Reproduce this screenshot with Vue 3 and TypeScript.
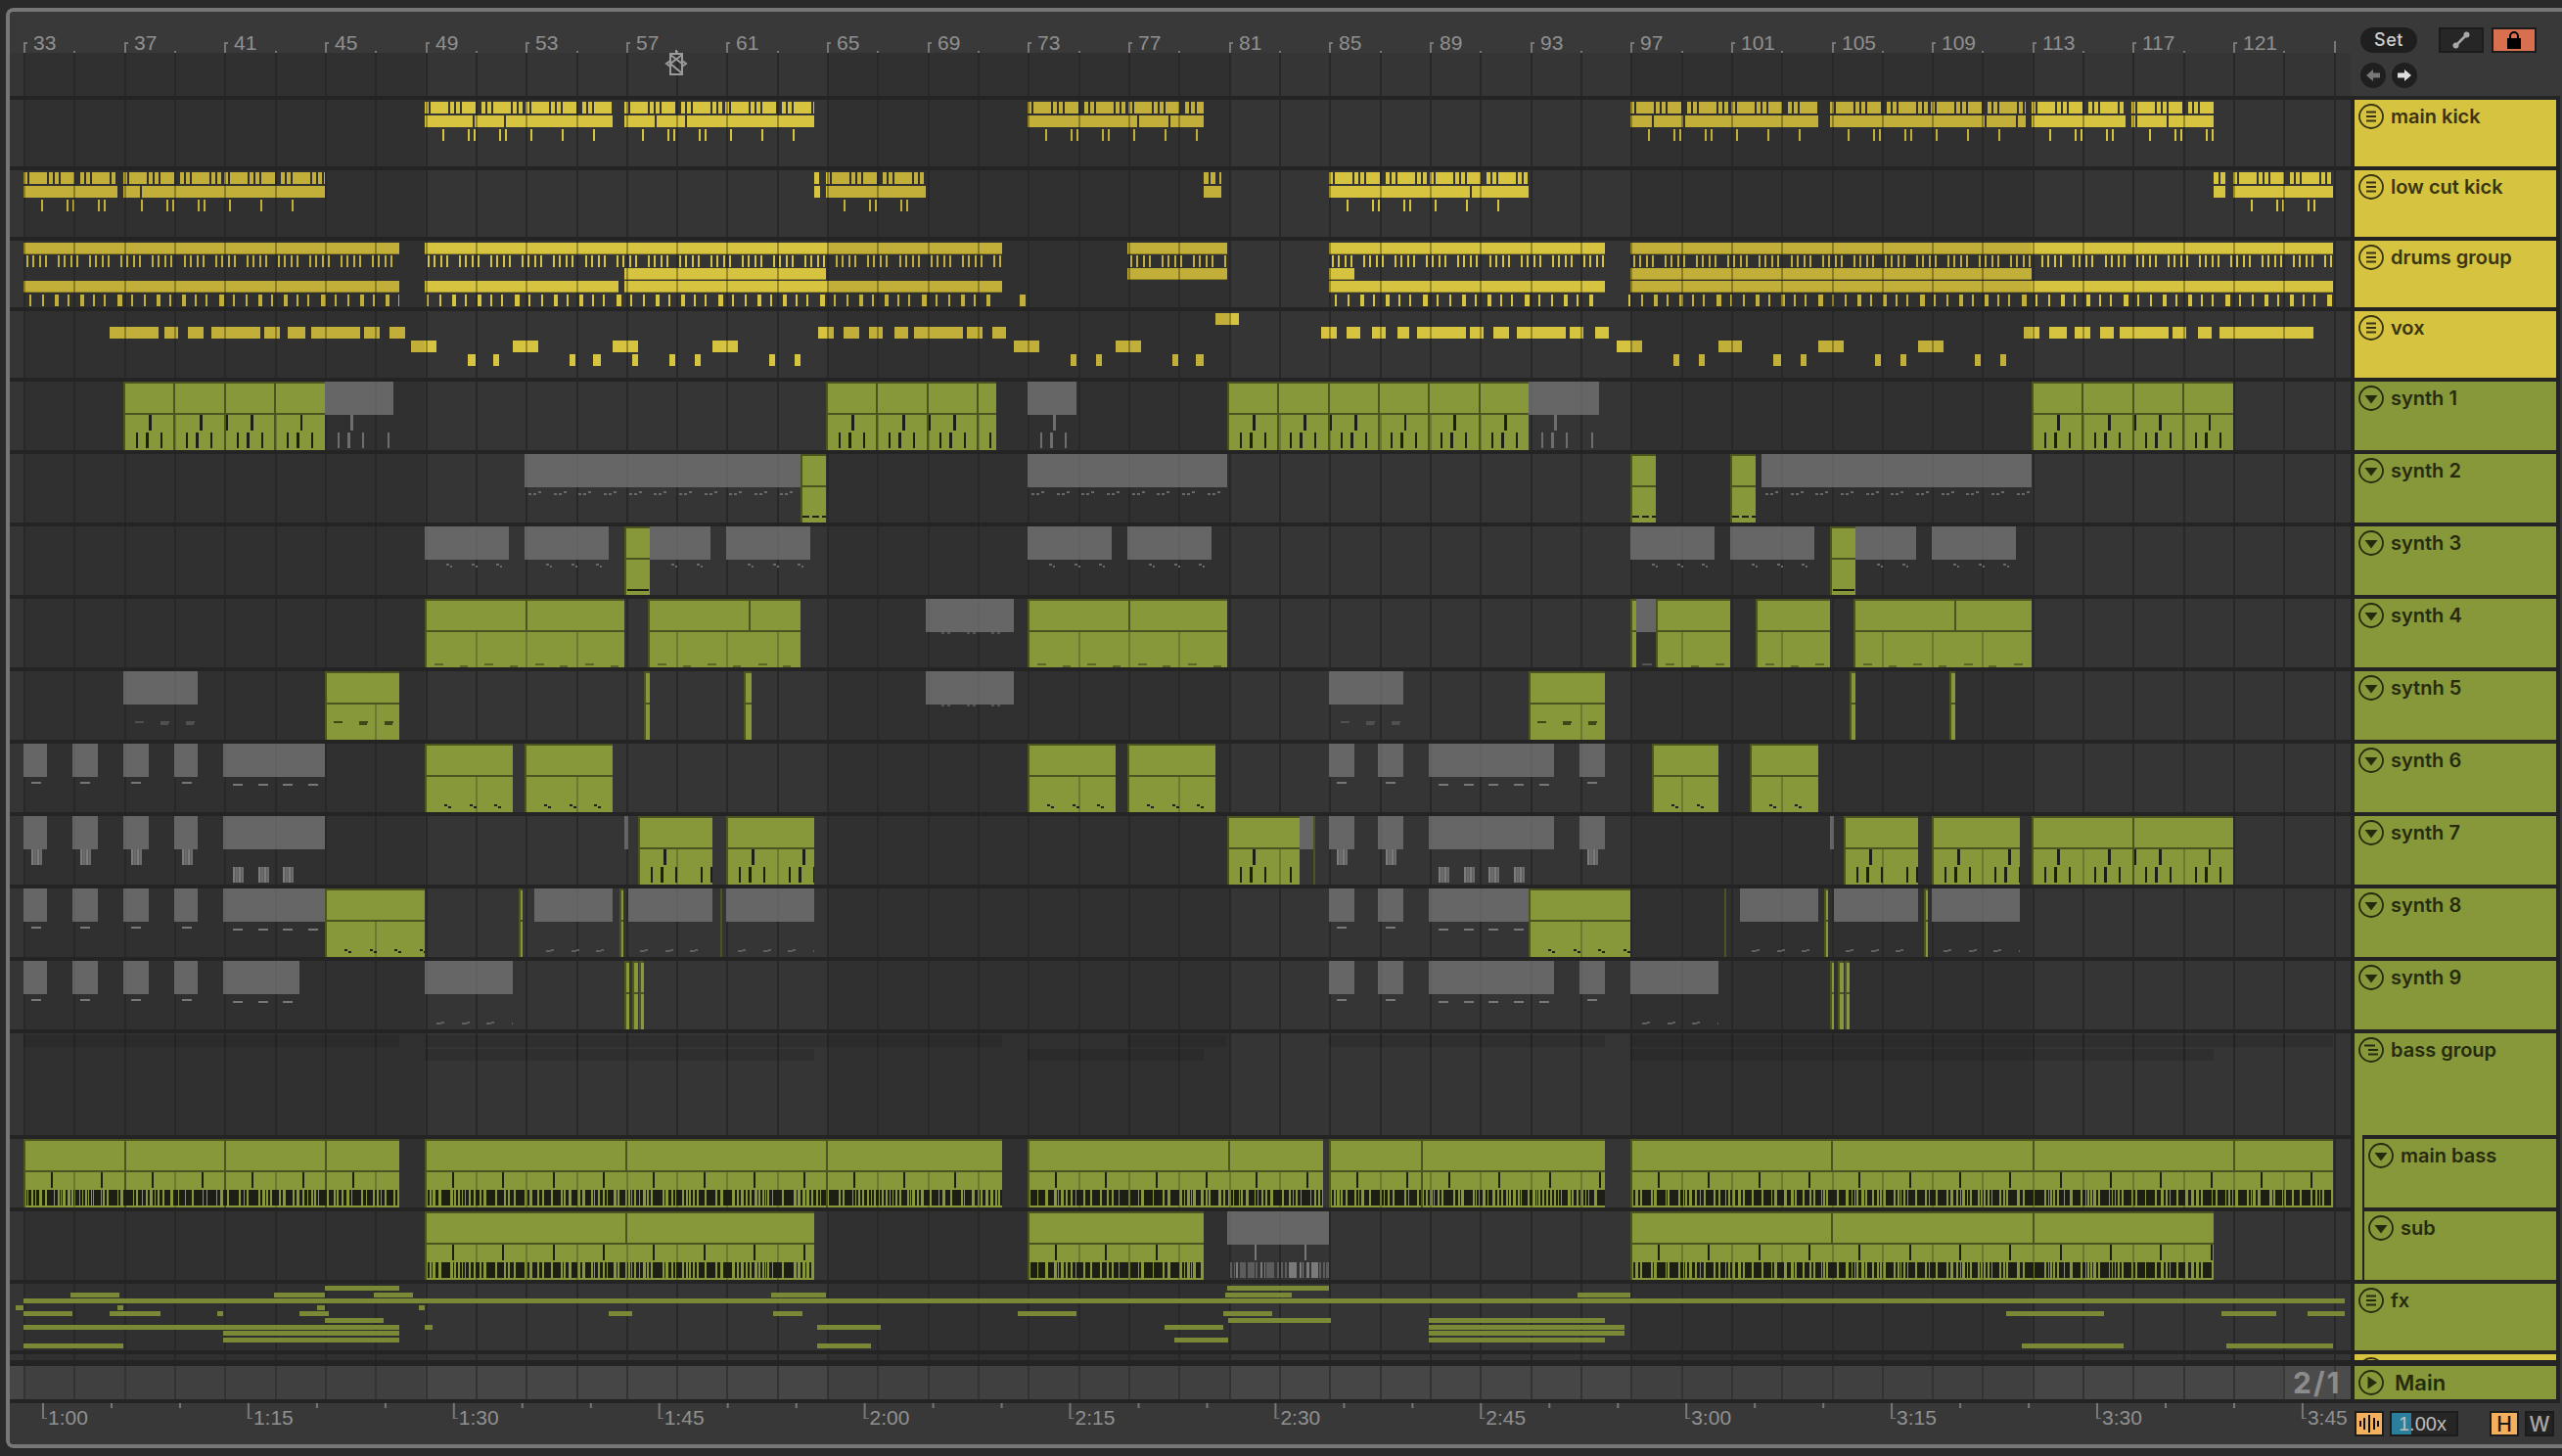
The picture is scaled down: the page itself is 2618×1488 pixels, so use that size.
<script setup lang="ts">
type R = [number, number, number, number, string]
type Clip = [string, number, number, number?]

const BAR = 25.66
const X0 = 24
const barX = (b: number) => X0 + (b - 33) * BAR

const GREEN = '#87983a'
const OLIVE = '#4c5522'
const OLIVE_L = '#6b7a30'
const GRAY = '#666666'
const NOTE = '#1e1f14'
const LINE = '#282828'

const zones: [number, number, boolean][] = [
  [10, 24, false], [24, 434, true], [434, 845, false], [845, 1256, true],
  [1256, 1666, false], [1666, 2076, true], [2076, 2402, false],
]

const grids: number[] = []
for (let b = 33; b <= 125; b += 2) grids.push(Math.round(barX(b)))

function base(h: number, dark = '#303030', light = '#353535', line = LINE): R[] {
  const out: R[] = []
  for (const z of zones) out.push([z[0], 0, z[1] - z[0], h, z[2] ? dark : light])
  for (const g of grids) out.push([g, 0, 2, h, line])
  return out
}

function yellow(out: R[], x: number, y: number, w: number, h: number, edge = false) {
  const end = x + w
  for (const z of zones) {
    const a = Math.max(x, z[0])
    const b = Math.min(end, z[1])
    if (b > a) out.push([a, y, b - a, h, z[2] ? '#c1af3a' : '#d6c340'])
  }
  if (edge) out.push([x, y + h - 1, w, 1, 'rgba(60,50,0,.35)'])
  for (const g of grids) {
    const a = Math.max(x, g)
    const b = Math.min(end, g + 2)
    if (b > a) out.push([a, y, b - a, h, 'rgba(50,42,0,.38)'])
  }
}

function pattern(a: number, b: number, period: number, list: [number, number][], fn: (x: number, w: number) => void) {
  for (let k = 0; k < 200; k++) {
    for (const p of list) {
      const x = a + k * period + p[0]
      if (x >= b) return
      fn(x, Math.min(p[1], b - x))
    }
  }
}

const KICK: [number, number][] = [[0, 4], [6, 18], [26, 4], [32, 4], [38, 14], [58, 4], [64, 4], [70, 18], [90, 4], [96, 4]]
const KTICK: [number, number][] = [[18, 2], [44, 2], [50, 2], [76, 2], [82, 2], [108, 2], [140, 2], [172, 2]]

function kickRow(clips: [number, number, number[]][]): R[] {
  const o = base(68)
  for (const [a, b, gaps] of clips) {
    if (b - a > 30) {
      pattern(a, b, 102.66, KICK, (x, w) => yellow(o, x, 2, w, 12))
      pattern(a, b, 192, KTICK, (x, w) => yellow(o, x, 30, w, 12))
    } else {
      pattern(a, b, 16, [[0, 5], [7, 5]], (x, w) => yellow(o, x, 2, w, 12))
    }
    let s = a
    for (const g of [...gaps, b]) {
      yellow(o, s, 16, g - s - (g === b ? 0 : 2), 12)
      s = g
    }
  }
  return o
}

const DT: [number, number][] = [[3, 2], [9, 2], [16, 2], [22, 2]]
const DL: [number, number][] = [[6, 2], [19, 2], [32, 4], [45, 2], [58, 4], [71, 2], [82, 2], [96, 5]]

function drumsRow(): R[] {
  const o = base(68)
  const mains: [number, number][] = [[24, 408], [434, 1024], [1152, 1254], [1358, 1640], [1666, 2384]]
  for (const [a, b] of mains) {
    yellow(o, a, 2, b - a, 12, true)
    pattern(a, b, 32.1, DT, (x, w) => yellow(o, x, 15, w, 12))
  }
  for (const [a, b] of [[638, 844], [1152, 1254], [1358, 1384], [1666, 2076]] as [number, number][]) {
    yellow(o, a, 28, b - a, 12, true)
  }
  for (const [a, b] of [[24, 408], [434, 632], [638, 1024], [1358, 1640], [1666, 2384]] as [number, number][]) {
    yellow(o, a, 41, b - a, 12, true)
  }
  for (const [a, b] of [[24, 408], [430, 1018], [1358, 1636], [1658, 2384]] as [number, number][]) {
    pattern(a, b, 104, DL, (x, w) => yellow(o, x, 55, w, 12))
  }
  yellow(o, 1042, 55, 6, 12)
  return o
}

function voxRow(): R[] {
  const o = base(68)
  const L: [number, number, number][] = [
    [0, 1242, 1266],
    ...[[112, 162], [168, 182], [192, 208], [216, 266], [270, 286], [294, 312], [318, 368], [372, 388], [398, 414], [836, 852], [862, 878], [888, 902], [914, 928], [934, 984], [988, 1004], [1014, 1028], [1350, 1366], [1376, 1390], [1402, 1416], [1428, 1440], [1448, 1498], [1502, 1516], [1526, 1542], [1550, 1600], [1604, 1618], [1630, 1644], [2068, 2084], [2094, 2112], [2120, 2136], [2146, 2160], [2166, 2216], [2220, 2234], [2246, 2260], [2268, 2364]].map((p) => [1, p[0], p[1]] as [number, number, number]),
    ...[[420, 446], [524, 550], [626, 652], [728, 754], [1036, 1062], [1140, 1166], [1652, 1678], [1756, 1780], [1858, 1884], [1960, 1986]].map((p) => [2, p[0], p[1]] as [number, number, number]),
    ...[[478, 486], [504, 510], [582, 588], [606, 614], [646, 652], [684, 690], [710, 716], [786, 792], [812, 818], [1094, 1100], [1120, 1126], [1198, 1204], [1222, 1230], [1710, 1716], [1736, 1742], [1812, 1820], [1840, 1846], [1916, 1922], [1942, 1948], [2018, 2024], [2044, 2050]].map((p) => [3, p[0], p[1]] as [number, number, number]),
  ]
  for (const [l, a, b] of L) yellow(o, a, 2 + l * 14, b - a, 12)
  return o
}

function dense(a: number, b: number, y: number, h: number, o: R[], dark: string, mid?: string) {
  let n = Math.round(a) + 1
  const rnd = () => {
    n += 1
    const v = Math.sin(n * 12.9898) * 43758.5453
    return v - Math.floor(v)
  }
  let x = a + 3
  while (x < b - 1) {
    const big = rnd() > 0.72
    const w = big ? 4 + Math.round(rnd() * 6) : 1 + Math.round(rnd() * 2)
    o.push([x, y, Math.min(w, b - x), h, mid && rnd() > 0.5 ? mid : dark])
    x += w + 1 + Math.round(rnd() * 2)
  }
}

type NoteFn = (o: R[], t: string, a: number, b: number) => void

function notes(o: R[], a: number, b: number, period: number, start: number, list: [number, number, number, number][], color: string) {
  for (let k = 0; k < 100; k++) {
    for (const [r, y, w, h] of list) {
      const x = a + start + k * period + r
      if (x >= b) return
      o.push([x, y, Math.min(w, b - x), h, color])
    }
  }
}

function sliced(o: R[], x: number, y: number, w: number, h: number) {
  o.push([x, y, w, h, '#5e5e5e'])
  for (let i = 0; i < w; i += 3) o.push([x + i, y, 2, h, i % 6 === 0 ? '#7c7c7c' : '#6c6c6c'])
}

function synthRow(clips: Clip[], fn: NoteFn, h = 70): R[] {
  const o = base(h)
  for (const [t, a, b, hdr] of clips) {
    if (t === 'g') {
      o.push([a, 0, b - a, h, GREEN])
      for (const g of grids) if (g > a + 2 && g < b - 1) o.push([g, 34, 2, h - 34, OLIVE_L])
      o.push([a, 0, b - a, 2, OLIVE], [a, 32, b - a, 2, OLIVE], [a, 0, 2, h, OLIVE])
      const every = (hdr ?? 4) * BAR
      for (let g = a + every; g < b - 2; g += every) o.push([Math.round(g), 0, 2, hdr === 2 || hdr === 4 ? h : 34, OLIVE])
    } else {
      o.push([a, 0, b - a, 34, GRAY])
      for (const g of grids) if (g > a && g < b - 1) o.push([g, 0, 2, 34, 'rgba(0,0,0,.04)'])
    }
    if (b - a > 14) fn(o, t, a, b)
  }
  return o
}

const ticksFn: NoteFn = (o, t, a, b) => {
  const c = t === 'g' ? NOTE : '#6e6e6e'
  notes(o, a, b, 205, 0, [[26, 34, 3, 16], [78, 34, 3, 16], [105, 34, 2, 16], [130, 34, 3, 16], [181, 34, 2, 16]], c)
  notes(o, a, b, 51.3, 0, [[13, 52, 2, 16], [23, 52, 3, 16], [38, 52, 2, 16]], c)
}

const synth1 = synthRow([['g', 126, 332, 2], ['x', 332, 402], ['g', 844, 1018, 2], ['x', 1050, 1100], ['g', 1254, 1562, 2], ['x', 1562, 1634], ['g', 2076, 2282, 2]], ticksFn)

const synth2 = synthRow([['x', 536, 818], ['g', 818, 844], ['x', 1050, 1254], ['g', 1666, 1692], ['g', 1768, 1794], ['x', 1800, 2076]], (o, t, a, b) => {
  if (t === 'g') notes(o, a, b, 10, 2, [[0, 63, 7, 2]], NOTE)
  else notes(o, a, b, 25.66, 4, [[0, 40, 3, 2], [5, 40, 3, 2], [10, 38, 3, 2]], '#6a6a6a')
})

const synth3 = synthRow([['x', 434, 520], ['x', 536, 622], ['g', 638, 664], ['x', 664, 726], ['x', 742, 828], ['x', 1050, 1136], ['x', 1152, 1238], ['x', 1666, 1752], ['x', 1768, 1854], ['g', 1870, 1896], ['x', 1896, 1958], ['x', 1974, 2060]], (o, t, a, b) => {
  if (t === 'g') o.push([a + 3, 64, b - a - 4, 2, NOTE])
  else notes(o, a, b, 25.66, 22, [[0, 38, 3, 2], [4, 40, 2, 2]], '#6a6a6a')
})

const synth4 = synthRow([['g', 434, 638], ['g', 662, 818], ['x', 946, 1036], ['g', 1050, 1254], ['g', 1666, 1672], ['g', 1692, 1768], ['g', 1794, 1870], ['g', 1894, 2076]], (o, t, a, b) => {
  if (t === 'g') notes(o, a, b, 51.3, 10, [[0, 66, 9, 2], [25.6, 68, 8, 2]], '#5a6726')
  else notes(o, a, b, 25.66, 16, [[0, 34, 3, 2], [6, 34, 3, 2]], '#555555')
})
synth4.push([1672, 0, 20, 34, GRAY], [1672, 34, 20, 36, '#303030'], [1678, 66, 10, 2, '#555555'])

const synth5 = synthRow([['x', 126, 202], ['g', 332, 408], ['g', 658, 664], ['g', 760, 768], ['x', 946, 1036], ['x', 1358, 1434], ['g', 1562, 1640], ['g', 1890, 1896], ['g', 1992, 1998]], (o, t, a, b) => {
  if (t === 'g') notes(o, a, b, 26, 9, [[0, 51, 9, 2], [26, 53, 8, 2], [52, 51, 9, 2]], '#3f4719')
  else if (b - a < 82) notes(o, a, b, 26, 12, [[0, 51, 9, 2], [26, 53, 8, 2], [52, 51, 9, 2]], '#505050')
  else notes(o, a, b, 25.66, 16, [[0, 34, 3, 2], [6, 34, 3, 2]], '#555555')
})

const GREY_TOP: Clip[] = [['x', 24, 48], ['x', 74, 100], ['x', 126, 152], ['x', 178, 202], ['x', 228, 332]]
const GREY_MID: Clip[] = [['x', 1358, 1384], ['x', 1408, 1434]]

const dashFn = (o: R[], a: number, b: number) => {
  if (b - a < 40) notes(o, a, b, 100, 8, [[0, 39, 10, 2]], '#777777')
  else notes(o, a, b, 25.66, 10, [[0, 41, 10, 2]], '#777777')
}

const synth6 = synthRow([...GREY_TOP, ['g', 434, 524], ['g', 536, 626], ['g', 1050, 1140], ['g', 1152, 1242], ...GREY_MID, ['x', 1460, 1588], ['x', 1614, 1640], ['g', 1688, 1756], ['g', 1788, 1858]], (o, t, a, b) => {
  if (t === 'g') notes(o, a, b, 25.66, 20, [[0, 62, 3, 2], [4, 64, 3, 2]], NOTE)
  else dashFn(o, a, b)
})

const synth7 = synthRow([...GREY_TOP, ['x', 638, 642], ['g', 652, 728], ['g', 742, 832], ['g', 1254, 1328], ['x', 1328, 1342], ['g', 1342, 1344], ...GREY_MID, ['x', 1460, 1588], ['x', 1614, 1640], ['x', 1870, 1874], ['g', 1884, 1960], ['g', 1974, 2064], ['g', 2076, 2282, 4]], (o, t, a, b) => {
  if (t === 'g') {
    ticksFn(o, t, a, b)
  } else if (b - a < 40 && b - a > 20) {
    sliced(o, a + 8, 34, 10, 16)
  } else if (b - a <= 20) {
    o.push([a, 34, 2, 16, GRAY], [a + 4, 52, 2, 16, GRAY])
  } else {
    for (let i = 0; i < (b - a) / 26 - 1; i++) sliced(o, a + 10 + i * 25.66, 52, 10, 16)
  }
})

const synth8 = synthRow([...GREY_TOP, ['g', 332, 434], ['g', 530, 534], ['l', 546, 626], ['g', 633, 637], ['l', 642, 728], ['g', 736, 738], ['l', 742, 832], ...GREY_MID, ['x', 1460, 1562], ['g', 1562, 1666], ['g', 1762, 1764], ['l', 1778, 1858], ['g', 1864, 1868], ['l', 1874, 1960], ['g', 1966, 1970], ['l', 1974, 2064]], (o, t, a, b) => {
  if (t === 'g') notes(o, a, b, 25.66, 20, [[0, 62, 3, 2], [4, 64, 3, 2]], NOTE)
  else if (t === 'l') notes(o, a, b, 25.66, 12, [[0, 63, 5, 2], [5, 62, 3, 2]], '#606060')
  else dashFn(o, a, b)
})

const synth9 = synthRow([['x', 24, 48], ['x', 74, 100], ['x', 126, 152], ['x', 178, 202], ['x', 228, 306], ['l', 434, 524], ['g', 638, 643], ['g', 646, 652], ['g', 653, 658], ...GREY_MID, ['x', 1460, 1588], ['x', 1614, 1640], ['l', 1666, 1756], ['g', 1870, 1874], ['g', 1878, 1884], ['g', 1885, 1890]], (o, t, a, b) => {
  if (t === 'l') notes(o, a, b, 25.66, 12, [[0, 63, 5, 2], [5, 62, 3, 2]], '#606060')
  else dashFn(o, a, b)
})

const bassFn: NoteFn = (o, t, a, b) => {
  if (t === 'g') {
    notes(o, a, b, 51.33, 28, [[0, 34, 2, 16]], NOTE)
    dense(a, b, 52, 16, o, NOTE)
  } else {
    notes(o, a, b, 51.33, 28, [[0, 34, 2, 16]], '#777777')
    dense(a, b, 52, 16, o, '#7a7a7a', '#5c5c5c')
  }
}
const mainBass = synthRow([['g', 24, 408, 4], ['g', 434, 844, 8], ['g', 844, 1024, 8], ['g', 1050, 1352, 8], ['g', 1358, 1452, 8], ['g', 1452, 1640, 8], ['g', 1666, 2384, 8]], bassFn)
const sub = synthRow([['g', 434, 832, 8], ['g', 1050, 1230, 8], ['x', 1254, 1358], ['g', 1666, 2262, 8]], bassFn)

function bassGroup(): R[] {
  const o = base(104)
  for (const [a, b] of [[24, 408], [434, 1024], [1152, 1254], [1358, 1640], [1666, 2384]]) o.push([a, 2, b - a, 12, 'rgba(0,0,0,.1)'])
  for (const [a, b] of [[434, 832], [1050, 1230], [1666, 2262]]) o.push([a, 16, b - a, 12, 'rgba(0,0,0,.1)'])
  return o
}

function fxRow(): R[] {
  const o = base(68)
  const lanes: [number, number][][] = [
    [[332, 408], [1254, 1358]],
    [[72, 122], [280, 332], [382, 422], [788, 844], [1252, 1320], [1612, 1666]],
    [[24, 2396]],
    [[16, 24], [120, 126], [324, 332], [428, 434]],
    [[24, 74], [112, 164], [222, 228], [306, 336], [622, 646], [790, 820], [1040, 1100], [1250, 1300], [2050, 2150], [2270, 2326], [2358, 2396]],
    [[332, 392], [1255, 1360], [1460, 1640]],
    [[24, 408], [434, 442], [835, 900], [1190, 1250], [1460, 1660]],
    [[228, 408], [1460, 1660]],
    [[228, 408], [1200, 1255], [1460, 1640]],
    [[24, 126], [835, 890], [2066, 2170], [2275, 2384]],
  ]
  lanes.forEach((list, i) => {
    for (const [a, b] of list) o.push([a, Math.round(2 + 6.6 * i), b - a, 5, '#7a8935'])
  })
  return o
}

const kickMain = kickRow([[434, 626, [485, 517]], [638, 832, [671, 702]], [1050, 1230, [1164, 1196]], [1666, 1858, [1690, 1722]], [1870, 2070, [2030, 2062]], [2076, 2172, []], [2178, 2262, [2184, 2216]]])
const kickLow = kickRow([[24, 120, []], [126, 332, [145]], [832, 838, []], [844, 946, []], [1230, 1248, []], [1358, 1562, [1504]], [2262, 2274, []], [2282, 2384, []]])

const rows = [
  { name: 'main kick', icon: 'fold', tone: 'y', h: 68, rects: kickMain },
  { name: 'low cut kick', icon: 'fold', tone: 'y', h: 68, rects: kickLow },
  { name: 'drums group', icon: 'fold', tone: 'y', h: 68, rects: drumsRow() },
  { name: 'vox', icon: 'fold', tone: 'y', h: 68, rects: voxRow() },
  { name: 'synth 1', icon: 'tri', tone: 'g', h: 70, rects: synth1 },
  { name: 'synth 2', icon: 'tri', tone: 'g', h: 70, rects: synth2 },
  { name: 'synth 3', icon: 'tri', tone: 'g', h: 70, rects: synth3 },
  { name: 'synth 4', icon: 'tri', tone: 'g', h: 70, rects: synth4 },
  { name: 'sytnh 5', icon: 'tri', tone: 'g', h: 70, rects: synth5 },
  { name: 'synth 6', icon: 'tri', tone: 'g', h: 70, rects: synth6 },
  { name: 'synth 7', icon: 'tri', tone: 'g', h: 70, rects: synth7 },
  { name: 'synth 8', icon: 'tri', tone: 'g', h: 70, rects: synth8 },
  { name: 'synth 9', icon: 'tri', tone: 'g', h: 70, rects: synth9 },
  { name: 'bass group', icon: 'group', tone: 'g', h: 104, rects: bassGroup() },
  { name: 'main bass', icon: 'tri', tone: 'g n1', h: 70, rects: mainBass },
  { name: 'sub', icon: 'tri', tone: 'g n2', h: 70, rects: sub },
  { name: 'fx', icon: 'fold', tone: 'g', h: 68, rects: fxRow() },
]

const stripRects = base(6)
const mainRects: R[] = [...base(34, '#404040', '#464646', '#333333'), [2333, 0, 69, 34, 'rgba(255,255,255,.03)']]

const topRects: R[] = []
const barLabels: { x: number; t: string }[] = []
for (const r of base(44)) topRects.push([r[0], r[1] + 42, r[2], r[3], r[4]])
for (let b = 33; b <= 125; b += 2) {
  const x = Math.round(barX(b))
  if ((b - 33) % 4 === 0) {
    const tall = b === 125 ? 30 : 31
    topRects.push([x, tall, 2, 42 - tall, '#777777'])
    if (b < 125) {
      topRects.push([x, tall, 4, 2, '#777777'])
      barLabels.push({ x: x + 10, t: String(b) })
    }
  } else topRects.push([x, 40, 2, 2, '#777777'])
}

const timeRects: R[] = []
const timeLabels: { x: number; t: string }[] = []
for (let i = 0; i < 12; i++) {
  const x = 43 + i * 209.9
  const min = 1 + Math.floor((i * 15) / 60)
  const sec = (i * 15) % 60
  timeRects.push([x, 0, 2, 16, '#777777'], [x, 15, 5, 1, '#777777'])
  if (i < 11) timeRects.push([x + 70, 0, 2, 5, '#777777'], [x + 140, 0, 2, 5, '#777777'])
  timeLabels.push({ x: x + 6, t: `${min}:${String(sec).padStart(2, '0')}` })
}
</script>

<template>
  <div class="page">
    <div class="frame">
      <div class="head-row">
        <svg class="lane" width="2392" height="86" viewBox="10 0 2392 86">
          <rect v-for="(r, i) in topRects" :key="i" :x="r[0]" :y="r[1]" :width="r[2]" :height="r[3]" :fill="r[4]" />
          <text v-for="l in barLabels" :key="l.t" class="ruler-text" :x="l.x" y="39">{{ l.t }}</text>
          <g class="scrub" fill="none" stroke="#9a9a9a" stroke-width="2">
            <rect x="685" y="43" width="12" height="21" />
            <path d="M697 44 L685 53 L697 63 M685 44 L697 53" />
            <path d="M685 50 L681 53 L685 56 M697 50 L701 53 L697 56" />
            <path d="M691 39V43" />
          </g>
        </svg>
        <div class="tools">
          <div class="tool-row">
            <div class="pill">Set</div>
            <div class="btn follow">
              <svg width="22" height="20" viewBox="0 0 22 20">
                <path d="M6 15L16 5" stroke="#a8a8a8" stroke-width="2.5" />
                <circle cx="5.5" cy="15.5" r="3" fill="#a8a8a8" />
                <circle cx="16.5" cy="4.5" r="3" fill="#a8a8a8" />
              </svg>
            </div>
            <div class="btn lock">
              <svg width="18" height="20" viewBox="0 0 18 20">
                <path d="M5 9V6a4 4 0 0 1 8 0v3" fill="none" stroke="#000" stroke-width="2" />
                <rect x="2" y="8" width="14" height="11" fill="#000" />
              </svg>
            </div>
          </div>
          <div class="tool-row arrows">
            <div class="round">
              <svg width="16" height="14" viewBox="0 0 16 14"><path d="M8 1L1 7L8 13V9.5H15V4.5H8Z" fill="#777" /></svg>
            </div>
            <div class="round">
              <svg width="16" height="14" viewBox="0 0 16 14"><path d="M8 1L15 7L8 13V9.5H1V4.5H8Z" fill="#dedede" /></svg>
            </div>
          </div>
        </div>
      </div>

      <div class="tracks">
        <div v-for="row in rows" :key="row.name" class="track" :style="{ height: row.h + 'px' }">
          <svg class="lane" width="2392" :height="row.h" :viewBox="`10 0 2392 ${row.h}`" shape-rendering="crispEdges">
            <rect v-for="(r, i) in row.rects" :key="i" :x="r[0]" :y="r[1]" :width="r[2]" :height="r[3]" :fill="r[4]" />
          </svg>
          <div class="hdr" :class="row.tone">
            <svg class="ico" width="26" height="26" viewBox="0 0 26 26">
              <circle cx="13" cy="13" r="12" fill="none" stroke="currentColor" stroke-width="1.8" />
              <path v-if="row.icon === 'fold'" d="M8 8.5H18M8 13H18M8 17.5H18" stroke="currentColor" stroke-width="2.2" />
              <path v-else-if="row.icon === 'group'" d="M6 8.5H17M10 13H20M10 17.5H20" stroke="currentColor" stroke-width="2.2" />
              <path v-else d="M6.5 10H19.5L13 18.5Z" fill="currentColor" />
            </svg>
            <span class="name">{{ row.name }}</span>
          </div>
        </div>

        <div class="track strip">
          <svg class="lane" width="2392" height="6" viewBox="10 0 2392 6" shape-rendering="crispEdges">
            <rect v-for="(r, i) in stripRects" :key="i" :x="r[0]" :y="r[1]" :width="r[2]" :height="r[3]" :fill="r[4]" />
          </svg>
          <div class="hdr y sliver">
            <svg class="ico" width="26" height="6" viewBox="0 0 26 6">
              <circle cx="13" cy="16" r="12" fill="none" stroke="currentColor" stroke-width="1.8" />
            </svg>
          </div>
        </div>

        <div class="track main">
          <svg class="lane" width="2392" height="34" viewBox="10 0 2392 34" shape-rendering="crispEdges">
            <rect v-for="(r, i) in mainRects" :key="i" :x="r[0]" :y="r[1]" :width="r[2]" :height="r[3]" :fill="r[4]" />
          </svg>
          <div class="sig">2/1</div>
          <div class="hdr g mainhdr">
            <svg class="ico" width="26" height="26" viewBox="0 0 26 26">
              <circle cx="13" cy="13" r="12" fill="none" stroke="currentColor" stroke-width="1.8" />
              <path d="M9.5 6.5V19.5L19 13Z" fill="currentColor" />
            </svg>
            <span class="name">Main</span>
          </div>
        </div>
      </div>

      <div class="foot-row">
        <svg class="lane" width="2392" height="42" viewBox="10 0 2392 42">
          <rect v-for="(r, i) in timeRects" :key="i" :x="r[0]" :y="r[1]" :width="r[2]" :height="r[3]" :fill="r[4]" />
          <text v-for="l in timeLabels" :key="l.t" class="ruler-text" :x="l.x" y="22">{{ l.t }}</text>
        </svg>
        <div class="controls">
          <div class="sq orange">
            <svg width="22" height="20" viewBox="0 0 22 20">
              <path d="M2 7V13M6 4V16M11 1V19M16 4V16M20 7V13" stroke="#111" stroke-width="2" />
            </svg>
          </div>
          <div class="speed"><span class="fill"></span><span class="val">1.00x</span></div>
          <div class="sq orange hw spaced">H</div>
          <div class="sq dark hw">W</div>
        </div>
      </div>
    </div>
  </div>
</template>

<style scoped>
.page {
  width: 2618px;
  height: 1488px;
  box-sizing: border-box;
  padding: 8px 0 8px 6px;
  background: #2a2a2a;
  overflow: hidden;
}
.frame {
  height: 1472px;
  box-sizing: border-box;
  border: 4px solid #777777;
  border-right: 0;
  border-radius: 8px 0 0 8px;
  background: #383838;
  display: flex;
  flex-direction: column;
  overflow: hidden;
}
.lane {
  display: block;
  flex: none;
}
.head-row {
  display: flex;
  height: 86px;
  background: #393939;
}
.tools {
  flex: 1;
  padding: 16px 0 0 10px;
  display: flex;
  flex-direction: column;
  gap: 10px;
}
.tool-row {
  display: flex;
  align-items: center;
  height: 26px;
}
.pill {
  width: 58px;
  height: 26px;
  border-radius: 13px;
  background: #1f1f1f;
  color: #cfcfcf;
  font: 500 18px/26px Inter, "Liberation Sans", sans-serif;
  text-align: center;
  letter-spacing: 0.5px;
  margin-right: 22px;
}
.btn {
  width: 46px;
  height: 26px;
  box-sizing: border-box;
  border: 2px solid #1c1c1c;
  display: flex;
  align-items: center;
  justify-content: center;
}
.follow {
  background: #262626;
  margin-right: 8px;
}
.lock {
  background: #d8704f;
}
.arrows {
  gap: 6px;
}
.round {
  width: 26px;
  height: 26px;
  border-radius: 50%;
  background: #1f1f1f;
  display: flex;
  align-items: center;
  justify-content: center;
}
.tracks {
  flex: 1;
  display: flex;
  flex-direction: column;
  gap: 4px;
  padding: 4px 0;
  background: #242424;
  width: 2606px;
  box-sizing: border-box;
}
.track {
  display: flex;
  flex: none;
  gap: 4px;
}
.strip {
  height: 6px;
  margin-bottom: 2px;
}
.main {
  height: 34px;
  position: relative;
}
.sig {
  position: absolute;
  left: 2333px;
  top: 0;
  height: 34px;
  font: 700 30px/34px Inter, "Liberation Sans", sans-serif;
  color: #8c8c8c;
  letter-spacing: 2px;
}
.hdr {
  width: 206px;
  flex: none;
  display: flex;
  align-items: flex-start;
  box-sizing: border-box;
  padding: 4px 0 0 4px;
  position: relative;
}
.y {
  background: #d6c340;
  color: #3a3510;
}
.g {
  background: #87983a;
  color: #262b0e;
}
.sliver {
  padding-top: 0;
  overflow: hidden;
}
.mainhdr {
  padding-top: 4px;
}
.mainhdr .name {
  font-size: 22px;
  margin-left: 11px;
}
.ico {
  flex: none;
  display: block;
}
.name {
  margin-left: 7px;
  font: 600 20px/26px Inter, "Noto Sans", sans-serif;
  white-space: nowrap;
}
.n1,
.n2 {
  width: 198px;
  margin-left: 8px;
  border-left: 2px solid #242424;
}
.n1::before,
.n2::before {
  content: "";
  position: absolute;
  left: -10px;
  width: 8px;
  top: -4px;
  bottom: -4px;
  background: #87983a;
}
.n2::before {
  bottom: 0;
}
.foot-row {
  display: flex;
  height: 42px;
  background: #383838;
}
.controls {
  flex: 1;
  display: flex;
  align-items: flex-start;
  padding: 8px 0 0 4px;
}
.sq {
  width: 30px;
  height: 26px;
  box-sizing: border-box;
  border: 2px solid #1c1c1c;
  display: flex;
  align-items: center;
  justify-content: center;
  font: 500 21px/1 Inter, "Liberation Sans", sans-serif;
}
.orange {
  background: #f3b05f;
  color: #1c1c1c;
}
.dark {
  background: #222222;
  color: #a8a8a8;
  margin-left: 6px;
}
.spaced {
  margin-left: 32px;
}
.speed {
  width: 70px;
  height: 26px;
  margin-left: 6px;
  box-sizing: border-box;
  border: 2px solid #1c1c1c;
  background: #262626;
  display: flex;
  position: relative;
  font: 400 20px/22px "Liberation Sans", sans-serif;
  color: #bdbdbd;
}
.fill {
  position: absolute;
  left: 0;
  top: 0;
  bottom: 0;
  width: 20px;
  background: #2b7f9c;
}
.val {
  position: relative;
  padding-left: 7px;
}
.ruler-text {
  font: 400 21px "Liberation Sans", sans-serif;
  fill: #909090;
}
</style>

<style>
html,
body {
  margin: 0;
  background: #2a2a2a;
}
</style>
